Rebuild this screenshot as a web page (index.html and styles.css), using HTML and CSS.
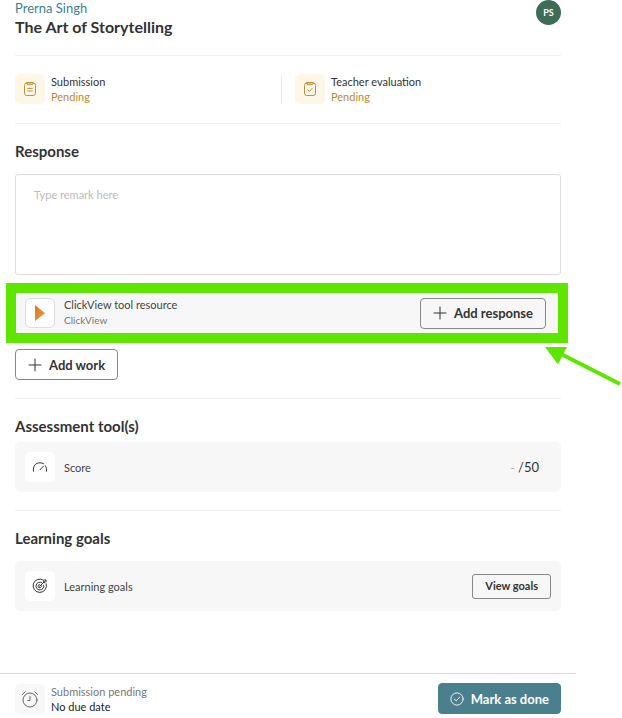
FILE: index.html
```html
<!DOCTYPE html>
<html lang="en">
<head>
<meta charset="utf-8">
<meta name="viewport" content="width=device-width, initial-scale=1">
<title>The Art of Storytelling</title>
<link rel="stylesheet" href="styles.css">
</head>
<body>
<div class="panel">
  <main class="content">
    <header class="header">
      <div>
        <a class="student" href="#">Prerna Singh</a>
        <h1 class="title">The Art of Storytelling</h1>
      </div>
      <span class="avatar">PS</span>
    </header>

    <section class="statuses">
      <div class="status">
        <span class="tile tile-warm">
          <svg class="icon" viewBox="0 0 16 16"><rect x="2.500" y="2" width="11" height="12.500" rx="2.400"/><path d="M4.800 1.500h6.400v1.200a1 1 0 0 1-1 1H5.800a1 1 0 0 1-1-1zM5.700 7.400h4.600M5.700 10h4.600"/></svg>
        </span>
        <div class="pair">
          <span class="label">Submission</span>
          <span class="pending">Pending</span>
        </div>
      </div>
      <div class="status status-next">
        <span class="tile tile-warm">
          <svg class="icon" viewBox="0 0 16 16"><rect x="2.500" y="2" width="11" height="12.500" rx="2.400"/><path d="M4.800 1.500h6.400v1.200a1 1 0 0 1-1 1H5.800a1 1 0 0 1-1-1zM5.600 8.700l1.800 1.700 3-3.300"/></svg>
        </span>
        <div class="pair">
          <span class="label">Teacher evaluation</span>
          <span class="pending">Pending</span>
        </div>
      </div>
    </section>

    <section class="section">
      <h2 class="heading"><label for="remark">Response</label></h2>
      <textarea class="remark" id="remark" placeholder="Type remark here"></textarea>
      <div class="card resource">
        <span class="tile tile-outlined">
          <svg class="play" viewBox="0 0 14 18"><defs><linearGradient id="orange" x1="0" y1="0" x2="1" y2="1"><stop offset="0" stop-color="#d9772a"/><stop offset="1" stop-color="#f39a38"/></linearGradient></defs><path d="M2 1L12 9.200 2 17z" fill="url(#orange)"/></svg>
        </span>
        <div class="pair card-text">
          <span class="name">ClickView tool resource</span>
          <span class="vendor">ClickView</span>
        </div>
        <button class="button" type="button">
          <svg class="plus" viewBox="0 0 14 14"><path d="M7 1v12M1 7h12"/></svg>
          Add response
        </button>
        <span class="highlight"></span>
        <svg class="arrow" viewBox="0 0 78 42"><path d="M16 8L75 38" fill="none" stroke="#5fe600" stroke-width="4" stroke-linecap="butt"/><path d="M0 1H22L13 18.500z" fill="#5fe600"/></svg>
      </div>
      <button class="button" type="button">
        <svg class="plus" viewBox="0 0 14 14"><path d="M7 1v12M1 7h12"/></svg>
        Add work
      </button>
    </section>

    <section class="section">
      <h2 class="heading heading-tight">Assessment tool(s)</h2>
      <div class="card">
        <span class="tile tile-white">
          <svg class="icon" viewBox="0 0 16 16"><path d="M1.500 12.200C.7 7 3.500 3.800 8 3.800c1.400 0 2.500.3 3.500.9M13.300 6.700c1.100 1.600 1.500 3.300 1.200 5.500M8 10.800L11.300 7.300"/></svg>
        </span>
        <span class="name card-text">Score</span>
        <span class="score"><span class="dash">-</span> /50</span>
      </div>
    </section>

    <section class="section">
      <h2 class="heading">Learning goals</h2>
      <div class="card">
        <span class="tile tile-white">
          <svg class="icon" viewBox="0 0 16 16"><path d="M11.300 2A6.700 6.700 0 1 0 14.200 5.700M9.700 4.600A3.900 3.900 0 1 0 11.700 7.200M7.700 8.300L12.400 3.600M11.700 4.300V2.800L13.200 1.300l.3 1.300 1.200.2L13.200 4.300zM9.100 7.300A1.600 1.600 0 1 1 7.600 6.600"/></svg>
        </span>
        <span class="name card-text">Learning goals</span>
        <button class="button button-small" type="button">View goals</button>
      </div>
    </section>
  </main>

  <footer class="footer">
    <span class="tile tile-grey">
      <svg class="clock" viewBox="0 0 18 18"><circle cx="9" cy="10" r="7"/><path d="M9 6.500V10.500H6.800M1.200 4.600L4.200 1.800M16.800 4.600L13.800 1.800"/></svg>
    </span>
    <div class="pair card-text">
      <span class="due-state">Submission pending</span>
      <span class="due">No due date</span>
    </div>
    <button class="button button-primary" type="button">
      <svg class="check" viewBox="0 0 16 16"><circle cx="8" cy="8" r="7"/><path d="M5 8.300l2.100 1.900L11 6"/></svg>
      Mark as done
    </button>
  </footer>
</div>
</body>
</html>
```
FILE: styles.css
```css
* { box-sizing: border-box; }

body {
  margin: 0;
  background: #fff;
  color: #333;
  font-family: Lato, "Liberation Sans", sans-serif;
  font-size: 11px;
  line-height: 15px;
}

h1, h2 { margin: 0; }

svg {
  display: block;
  flex: none;
  fill: none;
  stroke: currentColor;
  stroke-linecap: round;
  stroke-linejoin: round;
}

.panel {
  display: flex;
  flex-direction: column;
  min-height: 100vh;
  margin-right: 46px;
}

.content { flex: 1; padding: 0 15px; }

.header {
  display: flex;
  justify-content: space-between;
  align-items: flex-start;
  padding-bottom: 18px;
  border-bottom: 1px solid #f0f0f0;
}

.student {
  display: block;
  color: #3f8090;
  font-size: 13px;
  line-height: 16px;
  text-decoration: none;
}

.title { font-size: 16px; line-height: 21px; }

.avatar {
  width: 25px;
  height: 25px;
  border-radius: 50%;
  background: #3f6c58;
  color: #fff;
  font-size: 9px;
  font-weight: 700;
  line-height: 25px;
  text-align: center;
}

.statuses {
  display: grid;
  grid-template-columns: 266px 1fr;
  padding: 18px 0 19px;
  border-bottom: 1px solid #f0f0f0;
}

.status { display: flex; align-items: center; gap: 6px; }
.status-next { padding-left: 13px; border-left: 1px solid #ececec; }

.tile {
  display: flex;
  flex: none;
  align-items: center;
  justify-content: center;
  width: 30px;
  height: 30px;
  border-radius: 5px;
}

.tile-warm { background: #fdf7e8; color: #bd9142; }
.tile-white { background: #fff; }
.tile-grey { background: #f8f8f8; color: #666; }
.tile-outlined { background: #fff; border: 1px solid #ddd; }

.icon { width: 16px; height: 16px; }
.play { width: 14px; height: 18px; stroke: none; }
.clock { width: 18px; height: 18px; }
.check { width: 14px; height: 14px; }
.plus { width: 14px; height: 14px; }

.pair { display: flex; flex-direction: column; }
.pending { color: #b98a30; }

.section { padding: 17px 0 18px; }
.section + .section { border-top: 1px solid #f0f0f0; }

.heading { margin-bottom: 13px; font-size: 15px; line-height: 20px; }
.heading-tight { margin-bottom: 6px; }

.remark {
  display: block;
  width: 100%;
  height: 101px;
  padding: 12px 18px;
  border: 1px solid #ddd;
  border-radius: 3px;
  background: #fff;
  color: inherit;
  font: inherit;
  resize: none;
}

.remark::placeholder { color: #bbb; }

.card {
  display: flex;
  align-items: center;
  gap: 9px;
  height: 50px;
  padding: 0 10px;
  border-radius: 5px;
  background: #f7f7f7;
}

.card-text { flex: 1; }
.name { color: #444; }
.vendor { color: #777; font-size: 10px; line-height: 17px; }

.resource { position: relative; margin: 13px 0 11px; padding-right: 15px; }

.highlight {
  position: absolute;
  inset: -5px -7px -5px -9px;
  border: 10px solid #5fe600;
}

.arrow {
  position: absolute;
  top: 58px;
  right: -62px;
  width: 78px;
  height: 42px;
  stroke: none;
}

.button {
  display: inline-flex;
  align-items: center;
  justify-content: center;
  gap: 7px;
  height: 31px;
  padding: 0 12px;
  border: 1px solid #888;
  border-radius: 4px;
  background: transparent;
  color: #333;
  font-family: inherit;
  font-size: 13px;
  font-weight: 700;
  line-height: 18px;
}

.button-small { height: 25px; font-size: 11px; border-radius: 3px; }

.button-primary {
  padding: 0 11px;
  border-color: #4a808e;
  background: #4a808e;
  color: #fff;
}

.score { padding-right: 12px; font-size: 13px; }
.dash { color: #aaa; font-size: 11px; }

.footer {
  display: flex;
  align-items: center;
  gap: 6px;
  padding: 9px 15px 4px;
  border-top: 1px solid #ddd;
}

.due-state { color: #777; }
.due { color: #222; }
```
